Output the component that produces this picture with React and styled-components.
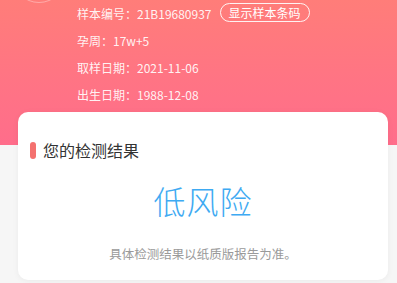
import React from 'react';
import styled, { createGlobalStyle } from 'styled-components';

const GlobalStyle = createGlobalStyle`
  html, body {
    margin: 0;
    padding: 0;
    background: #f6f6f6;
    overflow: hidden;
  }
  body {
    font-family: "Noto Sans CJK SC", "Noto Sans", sans-serif;
  }
`;

const Page = styled.div`
  width: 397px;
  height: 283px;
  background: #f6f6f6;
`;

const Header = styled.div`
  height: 145px;
  background: linear-gradient(180deg, #ff7d79 0%, #ff7484 55%, #ff6d8b 100%);
  display: flex;
  align-items: flex-start;
`;

const Avatar = styled.div`
  width: 54px;
  height: 54px;
  margin: -51px 0 0 12px;
  border-radius: 50%;
  border: 1.5px solid rgba(255, 255, 255, 0.35);
  box-sizing: border-box;
  flex-shrink: 0;
`;

const InfoList = styled.div`
  display: flex;
  flex-direction: column;
  margin-left: 11px;
`;

const InfoRow = styled.div`
  display: flex;
  align-items: center;
  height: 27px;
  font-size: 12px;
  color: rgba(255, 255, 255, 0.92);
`;

const Label = styled.span`
  white-space: nowrap;
`;

const BarcodeButton = styled.span`
  margin-left: 8px;
  margin-top: -2px;
  height: 19px;
  padding: 0 8px;
  border: 1px solid rgba(255, 255, 255, 0.9);
  border-radius: 10px;
  box-sizing: border-box;
  display: inline-flex;
  align-items: center;
  font-size: 12px;
  color: #fff;
`;

const Card = styled.div`
  margin: -33px 9px 0 18px;
  height: 168px;
  background: #fff;
  border-radius: 10px;
  box-shadow: 0 1px 6px rgba(0, 0, 0, 0.05);
  padding: 28px 12px 0;
  box-sizing: border-box;
  display: flex;
  flex-direction: column;
`;

const CardTitle = styled.div`
  display: flex;
  align-items: center;
  height: 20px;
  font-size: 16px;
  color: #333;
`;

const TitleMark = styled.span`
  width: 6px;
  height: 17px;
  border-radius: 3px;
  background: #f4716f;
  margin-right: 7px;
`;

const Result = styled.div`
  margin-top: 20px;
  text-align: center;
  font-size: 32px;
  font-weight: 300;
  line-height: 40px;
  color: #3eaaf2;
  letter-spacing: 1px;
`;

const Note = styled.div`
  margin-top: 25px;
  text-align: center;
  font-size: 12.5px;
  line-height: 18px;
  color: #9a9a9a;
`;

const rows = [
  { label: '样本编号：', value: '21B19680937', barcode: true },
  { label: '孕周：', value: '17w+5' },
  { label: '取样日期：', value: '2021-11-06' },
  { label: '出生日期：', value: '1988-12-08' },
];

export default function App() {
  return (
    <Page>
      <GlobalStyle />
      <Header>
        <Avatar />
        <InfoList>
          {rows.map((r) => (
            <InfoRow key={r.label}>
              <Label>{r.label}{r.value}</Label>
              {r.barcode && <BarcodeButton>显示样本条码</BarcodeButton>}
            </InfoRow>
          ))}
        </InfoList>
      </Header>
      <Card>
        <CardTitle>
          <TitleMark />
          您的检测结果
        </CardTitle>
        <Result>低风险</Result>
        <Note>具体检测结果以纸质版报告为准。</Note>
      </Card>
    </Page>
  );
}
